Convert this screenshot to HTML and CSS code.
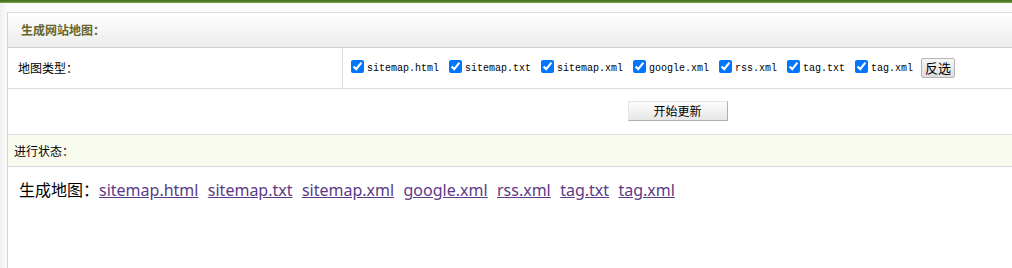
FILE: index.html
```html
<!DOCTYPE html>
<html lang="zh-CN">
<head>
<meta charset="UTF-8">
<title>生成网站地图</title>
<link rel="stylesheet" href="styles.css">
</head>
<body>
<div class="topbar"></div>
<div class="page">
  <div class="panel">
    <div class="panel-head">生成网站地图：</div>

    <div class="row row-types">
      <div class="cell-label">地图类型：</div>
      <div class="cell-value">
        <label class="opt"><input type="checkbox" checked>sitemap.html</label>
        <label class="opt"><input type="checkbox" checked>sitemap.txt</label>
        <label class="opt"><input type="checkbox" checked>sitemap.xml</label>
        <label class="opt"><input type="checkbox" checked>google.xml</label>
        <label class="opt"><input type="checkbox" checked>rss.xml</label>
        <label class="opt"><input type="checkbox" checked>tag.txt</label>
        <label class="opt"><input type="checkbox" checked>tag.xml</label>
        <button class="btn-small">反选</button>
      </div>
    </div>

    <div class="row row-action">
      <div class="cell-empty"></div>
      <div class="cell-center"><button class="btn-start">开始更新</button></div>
    </div>

    <div class="row-status">进行状态：</div>

    <div class="result">
      生成地图：<a href="#">sitemap.html</a><a href="#">sitemap.txt</a><a href="#">sitemap.xml</a><a href="#">google.xml</a><a href="#">rss.xml</a><a href="#">tag.txt</a><a href="#">tag.xml</a>
    </div>
  </div>
</div>
</body>
</html>
```

FILE: styles.css
```css
/* base */
body {
  margin: 0;
  background-color: #f4f4f4;
  font-family: "Noto Sans CJK SC", sans-serif;
  font-size: 12px;
  color: #000;
  overflow: hidden;
}

.topbar {
  height: 3px;
  background: linear-gradient(#3b6614, #79a046);
}

.page {
  padding: 9px 0 0 7px;
  height: 260px;
  background: linear-gradient(to right, #f0f0f0, #fafafa 6px);
}

/* panel */
.panel {
  background-color: #fff;
  border-top: 1px solid #dcdcdc;
  border-left: 1px solid #d6d6d6;
  height: 100%;
}

.panel-head {
  height: 34px;
  line-height: 34px;
  padding-left: 13px;
  font-weight: bold;
  font-size: 12px;
  color: #66662c;
  background: linear-gradient(#ffffff, #ececec);
  border-bottom: 1px solid #d2d2d2;
}

.row {
  display: grid;
  grid-template-columns: 335px 1fr;
  border-bottom: 1px solid #dddddd;
}

.row-types {
  height: 40px;
}

.cell-label {
  padding-left: 10px;
  line-height: 40px;
  border-right: 1px solid #dddddd;
}

.cell-value {
  display: flex;
  align-items: center;
  padding-left: 8px;
}

.opt {
  display: flex;
  align-items: center;
  margin-right: 10px;
  font-family: "Liberation Mono", monospace;
  font-size: 10px;
}

.opt input {
  width: 13px;
  height: 13px;
  margin: 0 3px 4px 0;
}

.btn-small {
  font-family: "Noto Sans CJK SC", sans-serif;
  font-size: 13px;
  height: 20px;
  padding: 0 3px;
  margin-left: -2px;
  margin-bottom: 1px;
  border: 1px solid #b5b5b5;
  border-radius: 2px;
  background: linear-gradient(#f6f6f6, #dedede);
  line-height: 16px;
}

.row-action {
  height: 45px;
}

.cell-center {
  display: flex;
  justify-content: center;
  padding-top: 12px;
}

.btn-start {
  width: 100px;
  height: 20px;
  font-family: "Noto Sans CJK SC", sans-serif;
  font-size: 12px;
  border: 1px solid #b0b0b0;
  border-top-color: #e5e5e5;
  border-left-color: #e5e5e5;
  background: linear-gradient(#fdfdfd, #e6e6e6);
  line-height: 16px;
  padding: 0;
}

.row-status {
  height: 31px;
  line-height: 31px;
  padding-left: 6px;
  background-color: #f9fbef;
  border-bottom: 1px solid #d8d8d8;
}

/* result links */
.result {
  padding: 11px 0 0 11px;
  font-size: 16px;
  line-height: 22px;
}

.result a {
  color: #5b3a86;
  margin-right: 9.4px;
  font-family: "Noto Sans", sans-serif;
}
```
